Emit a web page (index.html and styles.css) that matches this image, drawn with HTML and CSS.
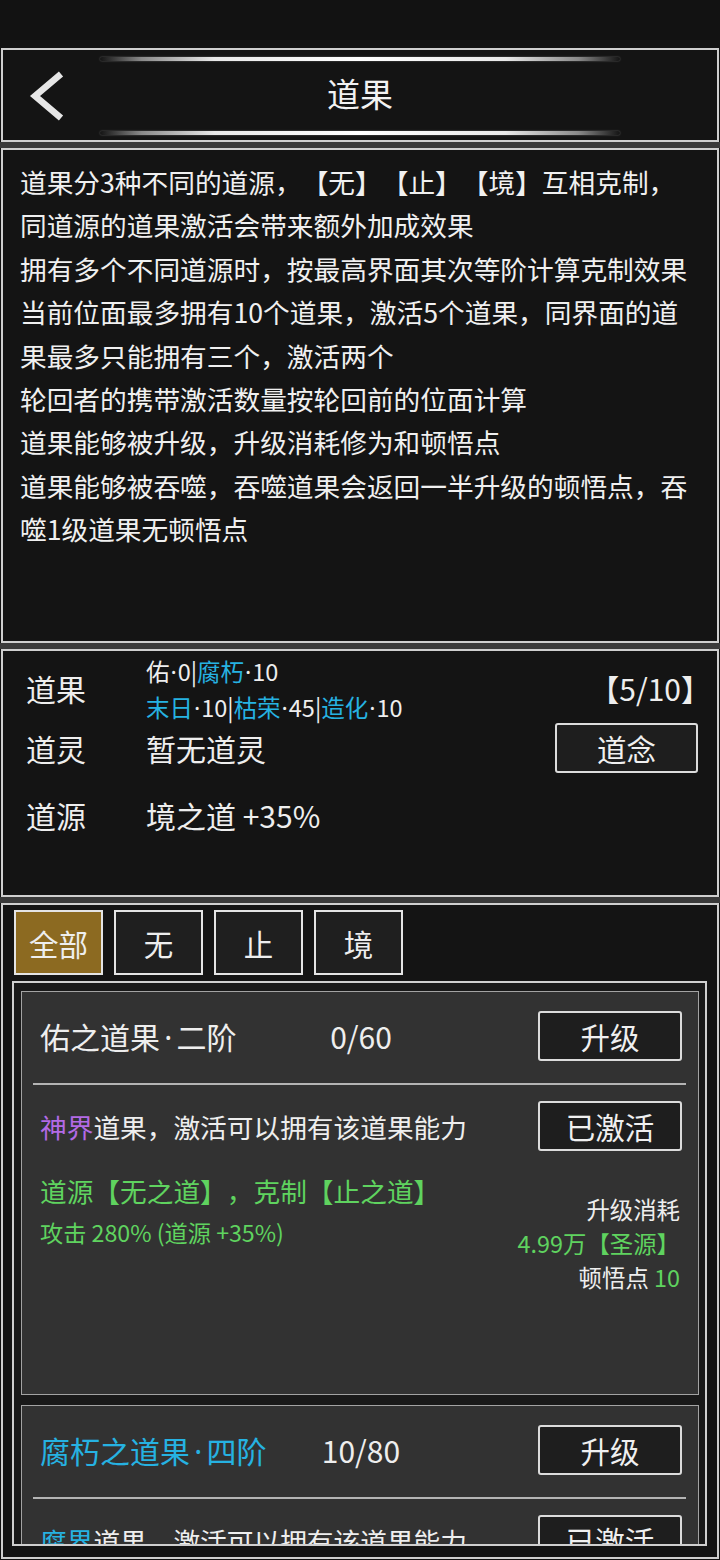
FILE: index.html
```html
<!DOCTYPE html>
<html lang="zh">
<head>
<meta charset="utf-8">
<title>道果</title>
<link rel="stylesheet" href="styles.css">
</head>
<body>
<div class="screen">
  <div class="statusbar"></div>

  <header class="panel header">
    <div class="deco"></div>
    <div class="header-mid">
      <button class="back" aria-label="返回">
        <svg width="40" height="50" viewBox="0 0 40 50"><path d="M34 3 L8 25 L34 47" fill="none" stroke="#e6e6e6" stroke-width="6.5"/></svg>
      </button>
      <h1 class="title">道果</h1>
      <span></span>
    </div>
    <div class="deco"></div>
  </header>

  <div class="sep"></div>

  <section class="panel info">
    <p class="line">道果分3种不同的道源，【无】【止】【境】互相克制，</p>
    <p class="line">同道源的道果激活会带来额外加成效果</p>
    <p class="line">拥有多个不同道源时，按最高界面其次等阶计算克制效果</p>
    <p class="line">当前位面最多拥有10个道果，激活5个道果，同界面的道</p>
    <p class="line">果最多只能拥有三个，激活两个</p>
    <p class="line">轮回者的携带激活数量按轮回前的位面计算</p>
    <p class="line">道果能够被升级，升级消耗修为和顿悟点</p>
    <p class="line">道果能够被吞噬，吞噬道果会返回一半升级的顿悟点，吞</p>
    <p class="line">噬1级道果无顿悟点</p>
  </section>

  <div class="sep"></div>

  <section class="panel stats">
    <div class="row row1">
      <span class="label">道果</span>
      <div class="small">
        <div>佑<span class="dot">·</span>0|<span class="cyan">腐朽</span><span class="dot">·</span>10</div>
        <div><span class="cyan">末日</span><span class="dot">·</span>10|<span class="cyan">枯荣</span><span class="dot">·</span>45|<span class="cyan">造化</span><span class="dot">·</span>10</div>
      </div>
      <span class="count">【5/10】</span>
    </div>
    <div class="row row2">
      <span class="label">道灵</span>
      <span class="value">暂无道灵</span>
      <button class="btn btn-nian">道念</button>
    </div>
    <div class="row row3">
      <span class="label">道源</span>
      <span class="value">境之道 +35%</span>
    </div>
  </section>

  <div class="sep"></div>

  <section class="panel list-panel">
    <div class="tabs">
      <button class="tab active">全部</button>
      <button class="tab">无</button>
      <button class="tab">止</button>
      <button class="tab">境</button>
    </div>
    <div class="list">
      <div class="card card-full">
        <div class="card-head">
          <span class="card-title">佑之道果<span class="dot dot-wide">·</span>二阶</span>
          <span class="card-count">0/60</span>
          <button class="btn btn-card">升级</button>
        </div>
        <div class="divider"></div>
        <div class="card-row">
          <span class="desc"><span class="purple">神界</span>道果，激活可以拥有该道果能力</span>
          <button class="btn btn-card">已激活</button>
        </div>
        <div class="card-body">
          <div class="effects">
            <div class="eff-main">道源【无之道】，克制【止之道】</div>
            <div class="eff-sub">攻击 280% (道源 +35%)</div>
          </div>
          <div class="cost">
            <div>升级消耗</div>
            <div class="green">4.99万【圣源】</div>
            <div>顿悟点 <span class="green">10</span></div>
          </div>
        </div>
      </div>
      <div class="card">
        <div class="card-head">
          <span class="card-title cyan">腐朽之道果<span class="dot dot-wide">·</span>四阶</span>
          <span class="card-count">10/80</span>
          <button class="btn btn-card">升级</button>
        </div>
        <div class="divider"></div>
        <div class="card-row">
          <span class="desc"><span class="cyan">腐界</span>道果，激活可以拥有该道果能力</span>
          <button class="btn btn-card">已激活</button>
        </div>
      </div>
    </div>
  </section>
</div>
</body>
</html>
```

FILE: styles.css
```css
* {
  box-sizing: border-box;
  margin: 0;
  padding: 0;
}

html, body {
  background: #121212;
}

body {
  width: 720px;
  height: 1560px;
  overflow: hidden;
  font-family: "Noto Sans CJK SC", "Noto Sans", sans-serif;
  color: #eeeeee;
  text-spacing-trim: space-all;
}

button {
  font-family: inherit;
  color: inherit;
  cursor: pointer;
  text-spacing-trim: space-all;
}

.dot {
  font-family: "Noto Sans", "Liberation Sans", sans-serif;
  margin: 0 0.04em;
}

.dot-wide {
  margin: 0 0.14em;
}

.statusbar {
  height: 48px;
  background: #121212;
}

.panel {
  margin: 0 1px;
  border: 2px solid #cfcfcf;
  background: #141414;
}

.sep {
  height: 6px;
  background: #3a3a3a;
}

/* header */
.header {
  height: 94px;
  padding-top: 7px;
  display: flex;
  flex-direction: column;
  align-items: center;
}

.deco {
  width: 520px;
  height: 4px;
  border-radius: 2px;
  background: linear-gradient(90deg, rgba(255,255,255,0) 0%, #8a8a8a 8%, #e8e8e8 22%, #ffffff 50%, #e8e8e8 78%, #8a8a8a 92%, rgba(255,255,255,0) 100%);
  box-shadow: 0 0 2px rgba(255,255,255,0.35);
}

.header-mid {
  width: 100%;
  height: 70px;
  display: grid;
  grid-template-columns: 1fr auto 1fr;
  align-items: center;
}

.back {
  justify-self: start;
  margin-left: 24px;
  background: none;
  border: 0;
  display: flex;
}

.title {
  font-size: 33px;
  font-weight: 400;
  color: #f2f2f2;
  line-height: 1;
  margin-top: -5px;
}

/* info */
.info {
  height: 495px;
  padding: 10px 8px 0 17px;
}

.line {
  font-size: 26.7px;
  line-height: 43.4px;
  white-space: nowrap;
  color: #f0f0f0;
}

/* stats */
.stats {
  height: 248px;
  padding: 3px 19px 0 23px;
}

.row {
  display: flex;
  align-items: center;
}

.label {
  width: 120px;
  font-size: 30px;
  flex: none;
}

.value {
  font-size: 30px;
}

.row1 {
  height: 68px;
}

.small {
  font-size: 23.5px;
  line-height: 34.5px;
  white-space: nowrap;
  margin-top: 3px;
}

.count {
  margin-left: auto;
  margin-right: -13px;
  font-size: 30px;
}

.row2 {
  height: 52px;
}

.row3 {
  height: 54px;
  margin-top: 14px;
}

.cyan {
  color: #26b2e2;
}

.purple {
  color: #b36ae6;
}

.green {
  color: #5fd35f;
}

.btn {
  background: #1e1e1e;
  border: 2px solid #dcdcdc;
  border-radius: 3px;
  font-size: 29.5px;
  color: #f0f0f0;
}

.btn-nian {
  margin-left: auto;
  width: 143px;
  height: 50px;
}

/* list panel */
.list-panel {
  height: 656px;
  padding: 5px 10px 0 9px;
}

.tabs {
  display: flex;
  gap: 11px;
  margin-left: 2px;
}

.tab {
  width: 89px;
  height: 65px;
  border: 2px solid #e4e4e4;
  background: #1f1f1f;
  font-size: 29.5px;
}

.tab.active {
  background: #8c6a21;
}

.list {
  margin-top: 6px;
  height: 565px;
  border: 2px solid #cfcfcf;
  background: #191919;
  padding: 8px 6px 0 7px;
  overflow: hidden;
}

.card {
  border: 1px solid #a3a3a3;
  background: #323232;
  padding: 19px 16px 0 18px;
  margin-bottom: 10px;
}

.card-full {
  height: 404px;
}

.card-head {
  display: grid;
  grid-template-columns: 1fr auto 1fr;
  align-items: center;
  height: 50px;
}

.card-title {
  font-size: 30px;
  white-space: nowrap;
}

.card-count {
  font-size: 30px;
}

.btn-card {
  justify-self: end;
  width: 144px;
  height: 50px;
}

.card-row .btn-card {
  margin-left: auto;
}

.divider {
  height: 2px;
  background: #b4b4b4;
  margin: 22px -4px 16px -7px;
}

.card-row {
  display: flex;
  align-items: center;
  height: 50px;
}

.desc {
  font-size: 26.7px;
  white-space: nowrap;
}

.card-body {
  display: flex;
  align-items: flex-start;
}

.effects {
  margin-top: 21px;
  color: #5fd35f;
}

.eff-main {
  font-size: 26.7px;
  line-height: 38px;
  white-space: nowrap;
}

.eff-sub {
  font-size: 23.2px;
  line-height: 44px;
  white-space: nowrap;
}

.cost {
  margin-left: auto;
  margin-right: 2px;
  margin-top: 41px;
  text-align: right;
  font-size: 23.4px;
  line-height: 34px;
  white-space: nowrap;
}
```
